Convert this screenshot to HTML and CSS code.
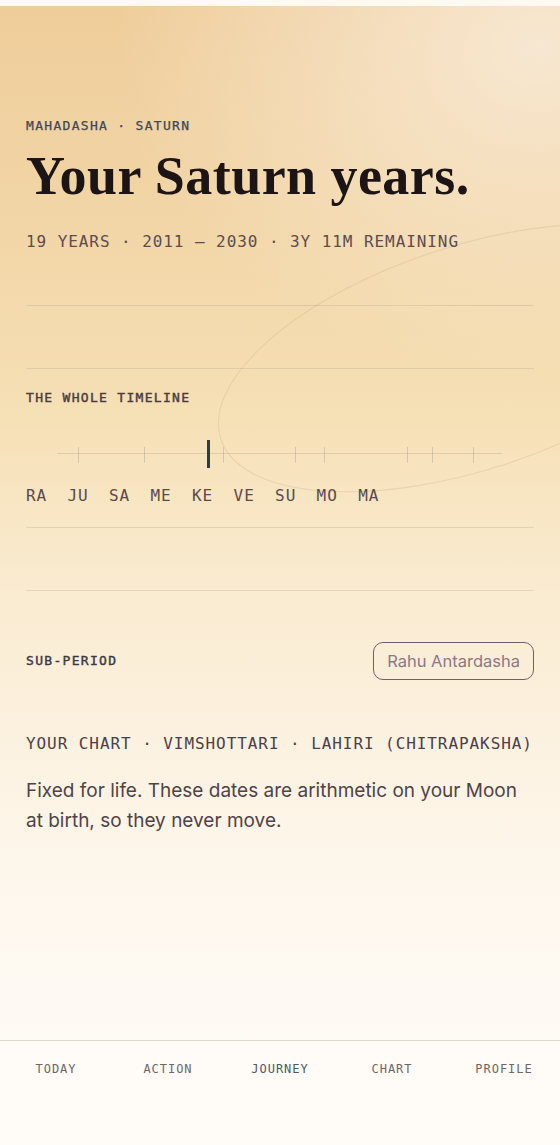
FILE: index.html
```html
<!DOCTYPE html>
<html lang="en">
<head>
<meta charset="utf-8">
<title>Your Saturn years</title>
<link rel="stylesheet" href="styles.css">
</head>
<body>
<div class="app">
  <div class="strip"></div>
  <main class="main">
    <svg class="orbit" width="560" height="560" viewBox="0 0 560 560" aria-hidden="true">
      <ellipse cx="470" cy="352" rx="262" ry="112" transform="rotate(-18 470 352)" fill="none" stroke="rgba(170,135,95,0.17)" stroke-width="1.1"/>
    </svg>
    <div class="content">
      <div class="eyebrow">MAHADASHA · SATURN</div>
      <h1 class="title">Your Saturn years.</h1>
      <div class="meta">19 YEARS · 2011 – 2030 · 3Y 11M REMAINING</div>

      <div class="divider first"></div>
      <div class="spacer"></div>
      <div class="divider"></div>

      <section class="timeline">
        <div class="label">THE WHOLE TIMELINE</div>
        <div class="track">
          <div class="track-line"></div>
          <span class="tick" style="left:4.7%"></span>
          <span class="tick" style="left:19.6%"></span>
          <span class="tick current" style="left:33.9%"></span>
          <span class="tick" style="left:37.3%"></span>
          <span class="tick" style="left:53.5%"></span>
          <span class="tick" style="left:60.0%"></span>
          <span class="tick" style="left:78.7%"></span>
          <span class="tick" style="left:84.3%"></span>
          <span class="tick" style="left:93.5%"></span>
        </div>
        <div class="planets">
          <span>RA</span><span>JU</span><span>SA</span><span>ME</span><span>KE</span><span>VE</span><span>SU</span><span>MO</span><span>MA</span>
        </div>
      </section>

      <div class="divider"></div>
      <div class="spacer"></div>
      <div class="divider"></div>

      <section class="subperiod">
        <div class="label">SUB-PERIOD</div>
        <button class="chip" type="button">Rahu Antardasha</button>
      </section>

      <div class="chart">YOUR CHART · VIMSHOTTARI · LAHIRI (CHITRAPAKSHA)</div>
      <p class="note">Fixed for life. These dates are arithmetic on your Moon at birth, so they never move.</p>
    </div>
  </main>
  <nav class="nav">
    <a class="nav-item">TODAY</a>
    <a class="nav-item">ACTION</a>
    <a class="nav-item active">JOURNEY</a>
    <a class="nav-item">CHART</a>
    <a class="nav-item">PROFILE</a>
  </nav>
</div>
</body>
</html>
```

FILE: styles.css
```css
* { box-sizing: border-box; }
html, body { margin: 0; padding: 0; }
body {
  background: #fffaf1;
  font-family: "Inter", "Noto Sans", sans-serif;
}
.app {
  width: 560px;
  height: 1145px;
  display: flex;
  flex-direction: column;
  overflow: hidden;
}
.strip {
  height: 6px;
  flex: none;
  background: #fffaf1;
}
.main {
  position: relative;
  flex: 1;
  background:
    radial-gradient(ellipse 420px 330px at 96% 4%, rgba(249, 236, 218, 0.85), rgba(249, 236, 218, 0) 100%),
    linear-gradient(180deg, #efcd9b 0%, #f2d6a7 22%, #f6e0b6 40%, #faebd0 56%, #fcf2e1 72%, #fef8ef 88%, #fefaf4 100%);
  border-bottom: 1.5px solid #dcd7c9;
}
.orbit {
  position: absolute;
  left: 0;
  top: 0;
  pointer-events: none;
}
.content {
  position: relative;
  padding: 112px 26px 0;
}
.eyebrow {
  font-family: "DejaVu Sans Mono", monospace;
  font-size: 13px;
  line-height: 16px;
  letter-spacing: 0.1em;
  color: #3e4757;
  -webkit-text-stroke: 0.25px currentColor;
}
.title {
  margin: 13px 0 0;
  font-family: "Liberation Serif", serif;
  font-weight: 700;
  font-size: 54px;
  line-height: 59px;
  letter-spacing: 0.45px;
  color: #1d1515;
}
.meta {
  margin-top: 26px;
  font-family: "DejaVu Sans Mono", monospace;
  font-size: 16px;
  line-height: 20px;
  letter-spacing: 0.058em;
  color: #5c4c4e;
}
.divider {
  height: 1px;
  background: rgba(90, 100, 120, 0.14);
}
.divider.first { margin-top: 53px; }
.spacer { height: 62px; }
.label {
  font-family: "DejaVu Sans Mono", monospace;
  font-size: 13px;
  line-height: 16px;
  letter-spacing: 0.1em;
  color: #4a3b3d;
  -webkit-text-stroke: 0.4px currentColor;
}
.timeline {
  padding: 21px 0 21px;
}
.track {
  position: relative;
  height: 28px;
  margin: 34px 32px 0 31px;
}
.track-line {
  position: absolute;
  left: 0;
  right: 0;
  top: 13px;
  height: 1px;
  background: rgba(90, 100, 120, 0.16);
}
.tick {
  position: absolute;
  top: 7px;
  width: 1px;
  height: 16px;
  background: rgba(90, 100, 120, 0.22);
}
.tick.current {
  top: 0;
  width: 3px;
  height: 28px;
  margin-left: -1px;
  background: #2f3a4c;
}
.planets {
  display: flex;
  gap: 20.4px;
  margin-top: 18px;
  font-family: "DejaVu Sans Mono", monospace;
  font-size: 16px;
  line-height: 20px;
  letter-spacing: 0.058em;
  color: #5a4a4c;
}
.subperiod {
  display: flex;
  align-items: center;
  justify-content: space-between;
  margin-top: 51px;
}
.subperiod .label { color: #3a3a44; }
.chip {
  height: 38px;
  padding: 0 13px;
  border: 1.5px solid #6f5f6c;
  border-radius: 10px;
  background: transparent;
  font-family: "Inter", sans-serif;
  font-size: 16.5px;
  color: #8a7886;
}
.chart {
  margin-top: 54px;
  font-family: "DejaVu Sans Mono", monospace;
  font-size: 16px;
  line-height: 20px;
  letter-spacing: 0.058em;
  color: #4a4048;
  white-space: nowrap;
}
.note {
  margin: 22px 0 0;
  font-family: "Inter", sans-serif;
  font-size: 19px;
  line-height: 30px;
  color: #4f4348;
}
.nav {
  flex: none;
  height: 104px;
  display: grid;
  grid-template-columns: repeat(5, 1fr);
  align-items: start;
  padding-top: 20px;
  background: #fffcf7;
}
.nav-item {
  text-align: center;
  font-family: "DejaVu Sans Mono", monospace;
  font-size: 12px;
  line-height: 16px;
  letter-spacing: 0.08em;
  color: #6c6669;
}
.nav-item.active { color: #4b5a6e; }
```
